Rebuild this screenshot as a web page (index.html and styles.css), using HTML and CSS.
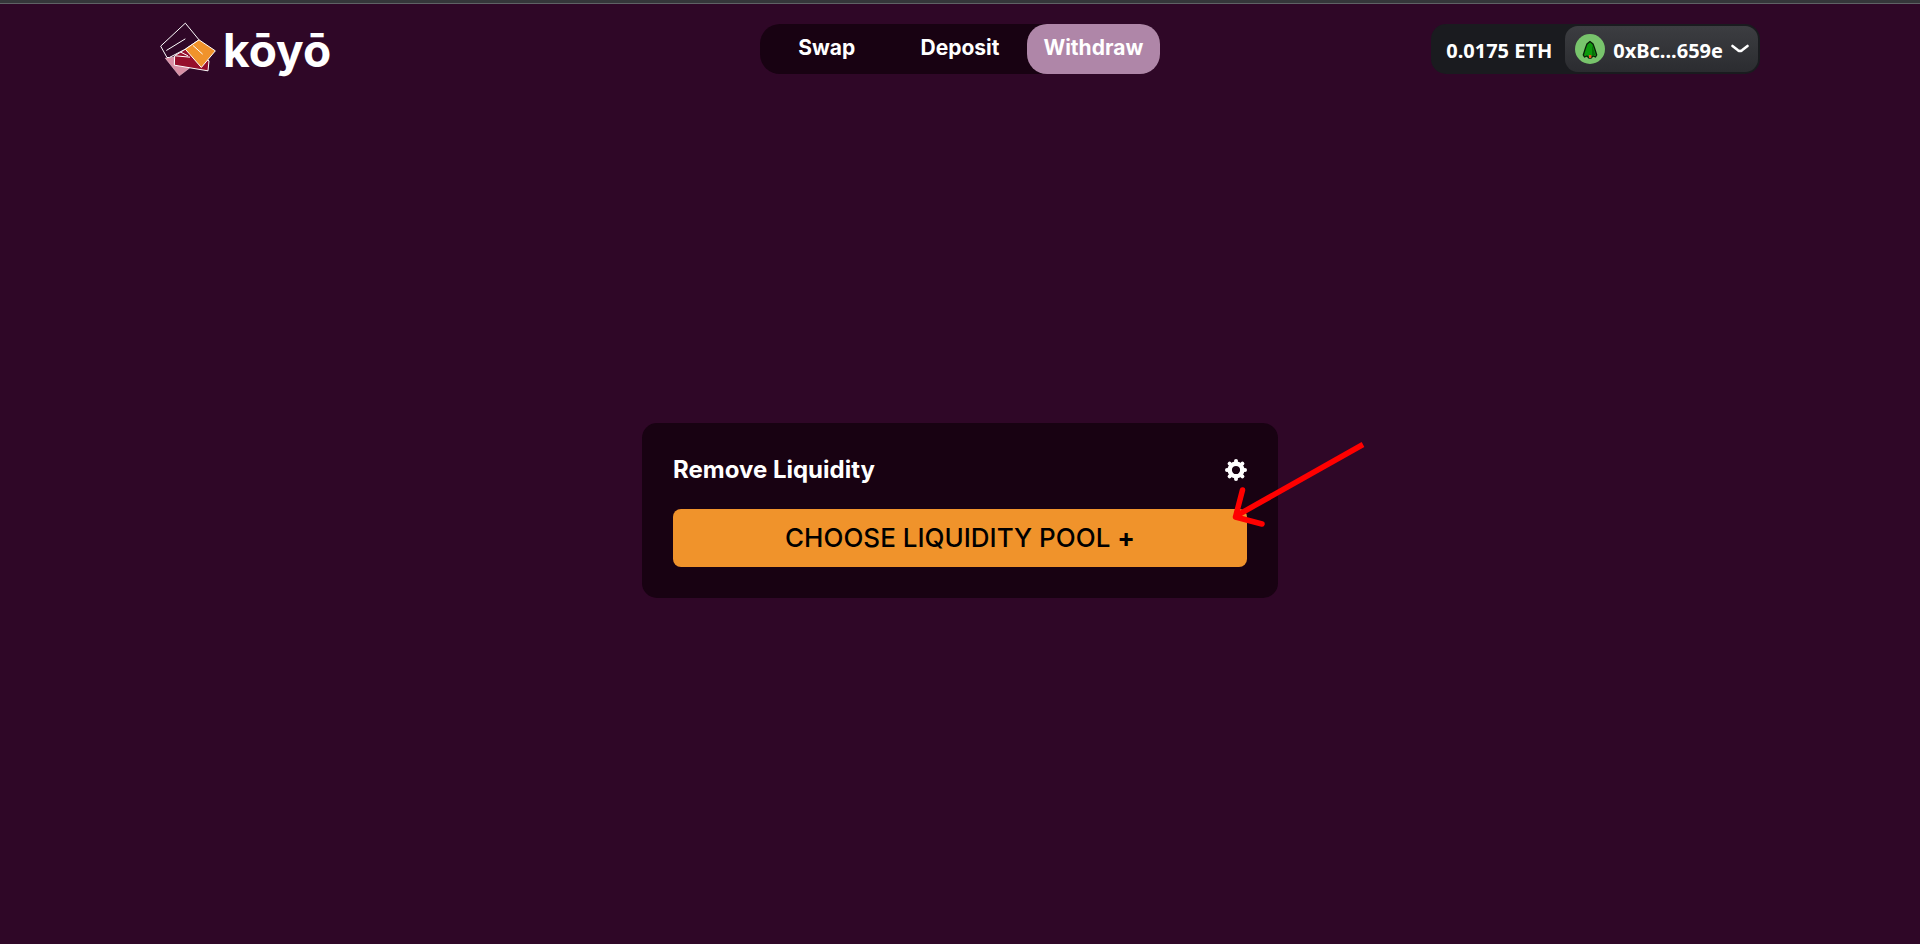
FILE: index.html
```html
<!DOCTYPE html>
<html lang="en">
<head>
<meta charset="utf-8">
<title>kōyō – Remove Liquidity</title>
<link rel="stylesheet" href="styles.css">
</head>
<body>
<header class="header">
  <a class="logo" href="#">
    <svg class="logo-mark" viewBox="14 20 168 164" aria-hidden="true">
      <path d="M30 128L60 124L102 158L72 181Z" fill="#d98fa5" stroke="#e6bccb" stroke-width="2"/>
      <path d="M58 121L90 101L161 136L158 166L57 149Z" fill="#960f2c" stroke="#fff" stroke-width="3"/>
      <path d="M60 121L104 125M76 110L98 121" stroke="#fff" stroke-width="3"/>
      <path d="M90 23L131 73L90 101L42 126L35 126L16 92Z" fill="#2f0727" stroke="#fff" stroke-width="3"/>
      <path d="M33 105L90 70" stroke="#fff" stroke-width="3"/>
      <path d="M131 73L180 106L138 156L90 101Z" fill="#f0932b" stroke="#fff" stroke-width="3"/>
      <path d="M113 90L142 116" stroke="#fff" stroke-width="3"/>
    </svg>
    <span class="logo-text">kōyō</span>
  </a>
  <nav class="nav">
    <a class="nav-link" href="#">Swap</a>
    <a class="nav-link" href="#">Deposit</a>
    <a class="nav-link active" href="#" aria-current="page">Withdraw</a>
  </nav>
  <div class="wallet">
    <span class="balance">0.0175 ETH</span>
    <button class="account" type="button">
      <svg class="avatar" viewBox="0 0 30 30" aria-hidden="true">
        <circle cx="15" cy="15" r="15" fill="#78c46c"/>
        <path d="M15 7.500L12 10L10.500 14L8.300 21L9.500 23L12 22L14 24H16L18 22L20.500 23L21.700 21L19.500 14L18 10Z" fill="#0c9a0c" stroke="#0a1f08" stroke-width="1.300"/>
        <path d="M17 11L19 17L20 21L17 21Z" fill="#087008"/>
        <path d="M14 21h2.300v3h-2.300z" fill="#f4511e"/>
      </svg>
      <span>0xBc...659e</span>
      <svg class="chevron" viewBox="0 0 18 10" aria-hidden="true"><path d="M1.500 2L7 6.300Q9 7.600 11 6.300L16.500 2" fill="none" stroke="#fff" stroke-width="2.600" stroke-linecap="round"/></svg>
    </button>
  </div>
</header>
<main class="main">
  <section class="card">
    <div class="card-head">
      <h1 class="title">Remove Liquidity</h1>
      <button class="settings" type="button" aria-label="Settings">
        <svg class="gear" viewBox="-11 -11 22 22" aria-hidden="true">
          <g fill="none" stroke="#fff">
            <circle r="6.300" stroke-width="4.400"/>
            <path d="M0-8.700V-9M0 8.700V9M-8.700 0H-9M8.700 0H9M-6.100-6.100L-6.400-6.400M6.100-6.100L6.400-6.400M-6.100 6.100L-6.400 6.400M6.100 6.100L6.400 6.400" stroke-width="4" stroke-linecap="round"/>
          </g>
        </svg>
      </button>
    </div>
    <button class="choose" type="button">CHOOSE LIQUIDITY POOL <span class="plus">+</span></button>
    <svg class="arrow" viewBox="0 0 140 92" aria-hidden="true">
      <path d="M135 6.500L8 78" stroke="#f00" stroke-width="5.500" fill="none"/>
      <path d="M14.500 52L7.500 79L34 86" stroke="#f00" stroke-width="5.500" fill="none" stroke-linecap="round" stroke-linejoin="round"/>
    </svg>
  </section>
</main>
</body>
</html>
```
FILE: styles.css
```css
* {
  box-sizing: border-box;
}

body {
  display: flex;
  flex-direction: column;
  min-height: 100vh;
  margin: 0;
  border-top: 3px solid #35363a;
  background: #2f0727;
  color: #fff;
  font-family: Inter, "Liberation Sans", sans-serif;
}

button {
  margin: 0;
  padding: 0;
  border: 0;
  background: none;
  color: inherit;
  font: inherit;
  cursor: pointer;
}

a {
  color: inherit;
  text-decoration: none;
}

.header {
  display: grid;
  grid-template-columns: 1fr 400px 1fr;
  align-items: center;
  padding: 20px 160px 2px;
  border-top: 1px solid #5f6165;
}

.logo {
  display: flex;
  align-items: center;
  gap: 7px;
  height: 50px;
}

.logo-mark {
  width: 56px;
  height: 55px;
}

.logo-text {
  padding-top: 2px;
  font-size: 46px;
  font-weight: 700;
  line-height: 50px;
}

.nav {
  display: grid;
  grid-template-columns: repeat(3, 1fr);
  border-radius: 20px;
  background: #180212;
}

.nav-link {
  height: 50px;
  border-radius: 20px;
  font-size: 21px;
  font-weight: 700;
  line-height: 48px;
  text-align: center;
}

.nav-link.active {
  background: #af86a8;
}

.wallet {
  display: flex;
  align-items: center;
  justify-self: end;
  gap: 13px;
  padding: 2px 2px 2px 15px;
  border-radius: 15px;
  background: #1a1b1f;
  font-family: "Noto Sans", sans-serif;
  font-size: 20px;
  font-weight: 700;
}

.balance {
  padding-top: 2px;
}

.account {
  display: flex;
  align-items: center;
  gap: 8px;
  height: 46px;
  padding: 2px 9px 0 10px;
  border-radius: 13px;
  background: linear-gradient(#3c3d41, #2b2c30);
}

.avatar {
  width: 30px;
  height: 30px;
  margin-bottom: 2px;
}

.chevron {
  width: 18px;
  height: 10px;
  margin-bottom: 2px;
}

.main {
  display: flex;
  flex: 1;
  align-items: center;
  justify-content: center;
}

.card {
  position: relative;
  width: 100%;
  max-width: 636px;
  padding: 31px;
  border-radius: 15px;
  background: #180212;
}

.card-head {
  display: flex;
  align-items: center;
  justify-content: space-between;
  margin-bottom: 23px;
}

.title {
  margin: 0;
  font-size: 24px;
  font-weight: 700;
  line-height: 32px;
}

.settings {
  display: flex;
}

.gear {
  width: 22px;
  height: 22px;
}

.choose {
  display: block;
  width: 100%;
  height: 58px;
  border-radius: 8px;
  background: #f0932b;
  color: #000;
  font-size: 26px;
  font-weight: 500;
}

.plus {
  font-weight: 700;
}

.arrow {
  position: absolute;
  top: 15px;
  right: -90px;
  width: 140px;
  height: 92px;
  pointer-events: none;
}
```
